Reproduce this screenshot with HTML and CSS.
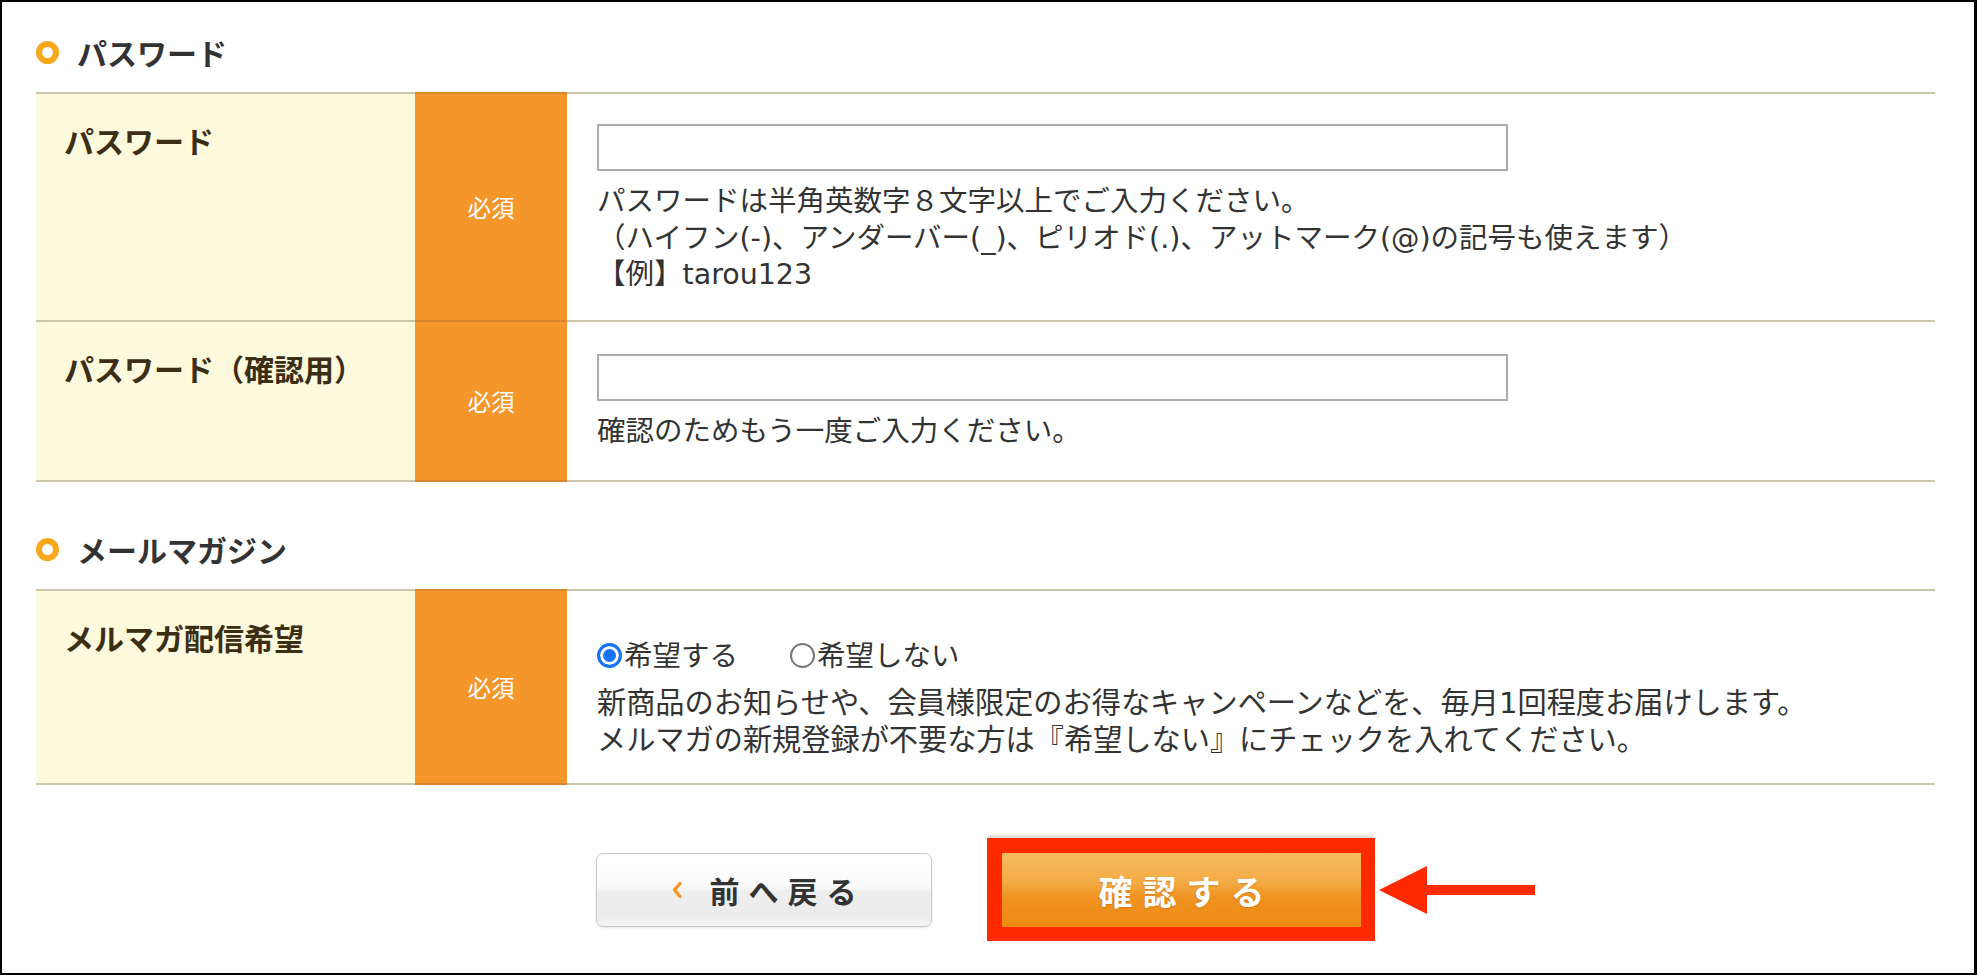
FILE: index.html
```html
<!DOCTYPE html>
<html lang="ja">
<head>
<meta charset="utf-8">
<title>会員登録 入力</title>
<link rel="stylesheet" href="styles.css">
</head>
<body>
<div class="frame">
  <section class="sec">
    <h2 class="sec-title"><span class="ring"></span>パスワード</h2>
    <div class="ftable">
      <div class="frow">
        <div class="flabel">パスワード</div>
        <div class="freq">必須</div>
        <div class="fbody body-pw">
          <input class="ftext" type="password">
          <p class="note note-pw">パスワードは半角英数字８文字以上でご入力ください。<br>（ハイフン(-)、アンダーバー(_)、ピリオド(.)、アットマーク(@)の記号も使えます）<br>【例】tarou123</p>
        </div>
      </div>
      <div class="frow">
        <div class="flabel">パスワード（確認用）</div>
        <div class="freq">必須</div>
        <div class="fbody body-pw2">
          <input class="ftext" type="password">
          <p class="note note-pw2">確認のためもう一度ご入力ください。</p>
        </div>
      </div>
    </div>
  </section>

  <section class="sec sec-mail">
    <h2 class="sec-title"><span class="ring"></span>メールマガジン</h2>
    <div class="ftable">
      <div class="frow">
        <div class="flabel">メルマガ配信希望</div>
        <div class="freq">必須</div>
        <div class="fbody body-mail">
          <div class="radios">
            <label class="ropt"><input class="radio" type="radio" name="mm" checked>希望する</label>
            <label class="ropt"><input class="radio" type="radio" name="mm">希望しない</label>
          </div>
          <p class="note note-mail">新商品のお知らせや、会員様限定のお得なキャンペーンなどを、毎月1回程度お届けします。<br>メルマガの新規登録が不要な方は『希望しない』にチェックを入れてください。</p>
        </div>
      </div>
    </div>
  </section>

  <div class="actions">
    <button class="btn-back" type="button">
      <svg class="chev" width="10" height="16" viewBox="0 0 10 16"><polyline points="8,1.5 2.5,8 8,14.5" fill="none" stroke="#f29322" stroke-width="3.2" stroke-linecap="round" stroke-linejoin="round"/></svg>
      <span class="back-text">前へ戻る</span>
    </button>
    <div class="highlight">
      <button class="btn-confirm" type="button">確認する</button>
      <svg class="arrow" width="158" height="50" viewBox="0 0 158 50"><polygon points="0,25 48,1 48,49" fill="#ff2a00"/><rect x="46" y="20" width="110" height="10" fill="#ff2a00"/></svg>
    </div>
  </div>
</div>
</body>
</html>
```
FILE: styles.css
```css
* { box-sizing: border-box; }
html, body { margin: 0; padding: 0; background: #fff; }
body {
  font-family: "Noto Sans CJK JP", "Noto Sans", sans-serif;
  color: #333;
}
.frame {
  width: 1977px;
  height: 975px;
  border-style: solid;
  border-color: #000;
  border-width: 2px 3px 2px 2px;
  padding: 30px 39px 0 34px;
  overflow: hidden;
}
.sec-title {
  display: flex;
  align-items: center;
  height: 40px;
  margin: 0;
  font-size: 30px;
  line-height: 40px;
  font-weight: 700;
  color: #333;
}
.ring {
  width: 23px;
  height: 23px;
  border: 6px solid #f8a81c;
  border-radius: 50%;
  margin-right: 18px;
  flex: none;
}
.sec-mail { margin-top: 47px; }
.ftable { margin-top: 20px; }
.frow {
  display: grid;
  grid-template-columns: 379px 152px 1fr;
}
.frow > * {
  border-bottom: 2px solid #cbc8ac;
}
.frow:first-child > * {
  border-top: 2px solid #cbc8ac;
}
.frow > .freq { border-color: #d8852b; }
.flabel {
  background: #fdf9dc;
  padding: 26px 0 0 28px;
  font-size: 30px;
  line-height: 40px;
  font-weight: 700;
  color: #3b2e14;
}
.freq {
  background: #f4962a;
  color: #fff;
  font-size: 23.5px;
  display: flex;
  align-items: center;
  justify-content: center;
}
.fbody {
  padding: 30px 30px 26px 30px;
}
.body-pw2 { padding-top: 32px; padding-bottom: 30px; }
.body-mail { padding-top: 45px; padding-bottom: 25px; }
.ftext {
  display: block;
  width: 911px;
  height: 47px;
  margin: 0;
  border: 2px solid #acacac;
  background: #fff;
  border-radius: 0;
}
.note {
  margin: 0;
  font-family: "DejaVu Sans", "Noto Sans CJK JP", sans-serif;
  font-size: 28.5px;
  line-height: 36.5px;
  color: #333;
}
.note-pw { margin-top: 13px; }
.note-pw2 { margin-top: 13px; }
.note-mail { margin-top: 12.5px; font-size: 29.2px; }
.radios {
  display: flex;
  align-items: center;
  height: 36.5px;
  font-size: 28.5px;
  line-height: 36.5px;
  color: #333;
}
.ropt {
  display: inline-flex;
  align-items: center;
  margin-right: 52px;
}
.radio {
  appearance: none;
  -webkit-appearance: none;
  width: 25px;
  height: 25px;
  margin: 3px 2px 0 0;
  border: 2px solid #777;
  border-radius: 50%;
  background: #fff;
  flex: none;
}
.radio:checked {
  border: 3px solid #1574f5;
  background: #1574f5;
  box-shadow: inset 0 0 0 3px #fff;
}
.actions {
  display: flex;
  justify-content: center;
  align-items: center;
  gap: 55px;
  margin-top: 53px;
}
.btn-back {
  width: 336px;
  height: 74px;
  border: 1px solid #c9c9c9;
  border-radius: 7px;
  background: linear-gradient(#ffffff 0%, #fafafa 45%, #eeeeee 52%, #ececec 85%, #f3f3f3 100%);
  box-shadow: 0 1px 2px rgba(0,0,0,0.12);
  display: flex;
  align-items: center;
  justify-content: center;
  gap: 28px;
  padding: 0;
  font-family: inherit;
  cursor: pointer;
}
.chev { display: block; flex: none; }
.back-text {
  font-size: 30px;
  font-weight: 700;
  letter-spacing: 9px;
  color: #333;
  line-height: 1;
  margin-right: -9px;
}
.highlight {
  position: relative;
  border-style: solid;
  border-color: #ff2a00;
  border-width: 15px 14px 14px 15px;
  box-shadow: 0 -4px 0 -1px #e4e4e4;
}
.btn-confirm {
  display: block;
  width: 359px;
  height: 74px;
  border: 0;
  margin: 0;
  padding: 0 0 0 10px;
  background: linear-gradient(#f6bb5e 0%, #f4ab45 40%, #f29f32 50%, #f09321 60%, #ee8b12 100%);
  color: #fff;
  font-family: inherit;
  font-size: 34px;
  font-weight: 700;
  letter-spacing: 10px;
  text-shadow: 0 1px 2px rgba(150,70,0,0.35);
  cursor: pointer;
}
.arrow {
  position: absolute;
  left: calc(100% + 18px);
  top: 50%;
  transform: translateY(-50%);
  display: block;
}
```
